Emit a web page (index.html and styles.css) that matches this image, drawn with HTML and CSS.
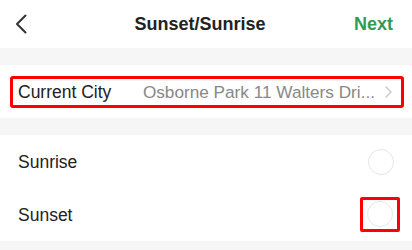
FILE: index.html
```html
<!DOCTYPE html>
<html>
<head>
<meta charset="utf-8">
<link rel="stylesheet" href="styles.css">
</head>
<body>
<div class="header">
  <svg class="back" width="12" height="20" viewBox="0 0 12 20"><path d="M10.5 1.5 L2 10 L10.5 18.5" fill="none" stroke="#333" stroke-width="2" stroke-linecap="round" stroke-linejoin="round"/></svg>
  <div class="title">Sunset/Sunrise</div>
  <div class="next">Next</div>
</div>
<div class="card city-card">
  <div class="city-box">
    <span class="label">Current City</span>
    <span class="value">Osborne Park 11 Walters Dri...</span>
    <svg class="chev" width="7" height="12" viewBox="0 0 7 12"><path d="M1 1 L6 6 L1 11" fill="none" stroke="#c4c4c4" stroke-width="1.3" stroke-linecap="round" stroke-linejoin="round"/></svg>
  </div>
</div>
<div class="card">
  <div class="row">
    <span class="label">Sunrise</span>
    <span class="radio"></span>
  </div>
  <div class="row">
    <span class="label">Sunset</span>
    <span class="radio-box"><span class="radio"></span></span>
  </div>
</div>
</body>
</html>
```
FILE: styles.css
```css
html, body {
  margin: 0;
  padding: 0;
  background: #f6f6f6;
  font-family: "Liberation Sans", Arial, sans-serif;
  color: #222;
}
.header {
  height: 48px;
  background: #fff;
  display: flex;
  align-items: center;
  padding: 0 19px 0 15px;
}
.back {
  display: block;
}
.title {
  flex: 1;
  text-align: center;
  font-size: 18px;
  font-weight: bold;
  color: #222;
  padding-left: 19px;
  margin-top: 1px;
}
.next {
  font-size: 18px;
  font-weight: bold;
  color: #339a55;
  margin-top: 1px;
}
.card {
  background: #fff;
  margin-top: 17px;
}
.city-card {
  padding: 11px 8px 10px 10px;
}
.city-box {
  border: 3px solid #f00;
  border-radius: 3px;
  height: 26px;
  display: flex;
  align-items: center;
  padding: 0 9px 0 5px;
}
.label {
  font-size: 17.5px;
  color: #222;
  padding-top: 1px;
}
.value {
  flex: 1;
  text-align: right;
  font-size: 17.2px;
  color: #888;
  margin-right: 10px;
  white-space: nowrap;
  padding-top: 1px;
}
.chev {
  display: block;
}
.row {
  height: 53px;
  display: flex;
  align-items: center;
  justify-content: space-between;
  padding: 0 18px;
}
.radio {
  display: block;
  box-sizing: border-box;
  width: 26px;
  height: 26px;
  border: 1.5px solid #e6e6e6;
  border-radius: 50%;
}
.radio-box {
  display: block;
  border: 3px solid #f00;
  border-radius: 2px;
  padding: 1px 4px 2px 4px;
  margin-right: -6px;
}
```
